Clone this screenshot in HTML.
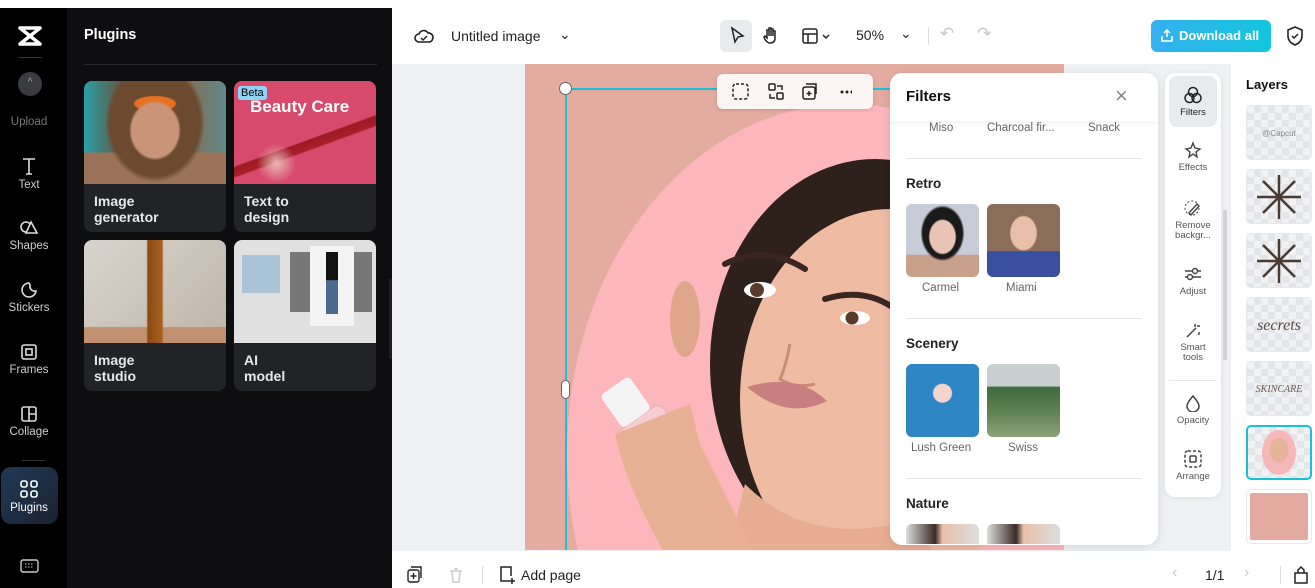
<!DOCTYPE html>
<html><head><meta charset="utf-8"><style>
*{box-sizing:border-box;margin:0;padding:0}
html,body{width:1315px;height:588px;overflow:hidden}
body{font-family:"Liberation Sans",sans-serif;background:#fff;position:relative}
.a{position:absolute}
.side{left:0;top:8px;width:67px;height:580px;background:#000}
.si{position:absolute;left:0;width:58px;text-align:center;color:#cfcfd2;font-size:11.5px}
.si svg{display:block;margin:0 auto 3px}
.panel{left:67px;top:8px;width:325px;height:580px;background:#0e0e10}
.card{position:absolute;width:142px;height:151px;background:#222327;border-radius:8px;overflow:hidden}
.card .im{height:103px}
.card .t{color:#e8e8ea;font-weight:bold;font-size:14px;line-height:16px;padding:9px 10px}
.tb{color:#222;font-size:14px}
.tl{position:absolute;left:1165px;width:56px;text-align:center;font-size:9.5px;color:#555;line-height:10px}
.tl svg{display:block;margin:0 auto 4px}
.lay{position:absolute;left:1246px;width:66px;height:55px;border-radius:5px;background:repeating-conic-gradient(#e3e5e8 0 25%,#f1f2f4 0 50%) 0 0/14px 14px;border:1px solid #e6e8ea;overflow:hidden}
.fl{font-size:11.5px;color:#666;position:absolute}
.th{position:absolute;width:73px;height:73px;border-radius:6px;overflow:hidden}
.sec{position:absolute;left:906px;font-size:13.5px;font-weight:bold;color:#222}
.hr{position:absolute;left:906px;width:236px;height:1px;background:#e6e6e6}
</style></head><body>
<div class="a side">
 <svg class="a" style="left:17px;top:17px" width="26" height="22" viewBox="0 0 26 22"><path d="M3 3h20M3 19h20M3 3l20 16M23 3L3 19" stroke="#fff" stroke-width="3.5" fill="none" stroke-linecap="round"/></svg>
 <div class="a" style="left:18px;top:49px;width:24px;height:1px;background:#333"></div>
 <div class="a" style="left:18px;top:64px;width:24px;height:24px;border-radius:50%;background:#3a3b3f;color:#aaa;font-size:10px;text-align:center;line-height:22px">^</div>
 <div class="si" style="top:108px;color:#777">Upload</div>
 <div class="si" style="top:148px"><svg width="20" height="20" viewBox="0 0 20 20"><path d="M4 3h12M10 3v15M7 18h6" stroke="#ddd" stroke-width="1.6" fill="none"/></svg>Text</div>
 <div class="si" style="top:211px"><svg width="20" height="18" viewBox="0 0 20 18"><circle cx="7" cy="8" r="5" stroke="#ddd" stroke-width="1.6" fill="none"/><path d="M12 3l6 11H7z" stroke="#ddd" stroke-width="1.6" fill="#000"/></svg>Shapes</div>
 <div class="si" style="top:273px"><svg width="20" height="18" viewBox="0 0 20 18"><path d="M10 2a7 7 0 1 0 7 8 5 5 0 0 1-6-6z" stroke="#ddd" stroke-width="1.6" fill="none"/></svg>Stickers</div>
 <div class="si" style="top:335px"><svg width="20" height="18" viewBox="0 0 20 18"><rect x="3" y="2" width="14" height="14" rx="2" stroke="#ddd" stroke-width="1.6" fill="none"/><rect x="7" y="6" width="6" height="6" stroke="#ddd" stroke-width="1.6" fill="none"/></svg>Frames</div>
 <div class="si" style="top:397px"><svg width="20" height="18" viewBox="0 0 20 18"><rect x="3" y="2" width="14" height="14" rx="2" stroke="#ddd" stroke-width="1.6" fill="none"/><path d="M10 2v14M10 9h7" stroke="#ddd" stroke-width="1.6"/></svg>Collage</div>
 <div class="a" style="left:22px;top:399px;width:16px;height:1px"></div>
 <div class="a" style="left:22px;top:398px;width:24px;height:1px;background:#333;top:398px;display:none"></div>
 <div class="a" style="left:22px;top:399px;width:16px"></div>
 <div class="a" style="left:22px;top:452px;width:24px;height:1px;background:#333"></div>
 <div class="a" style="left:1px;top:459px;width:57px;height:57px;border-radius:10px;background:linear-gradient(135deg,#1f3a55,#1b2230)"></div>
 <div class="si" style="top:471px;color:#fff"><svg width="20" height="20" viewBox="0 0 20 20"><g stroke="#fff" stroke-width="1.6" fill="none"><rect x="2" y="2" width="6" height="6" rx="2"/><rect x="12" y="2" width="6" height="6" rx="2"/><rect x="2" y="12" width="6" height="6" rx="2"/><rect x="12" y="12" width="6" height="6" rx="2"/></g></svg>Plugins</div>
 <svg class="a" style="left:20px;top:550px" width="20" height="16"><rect x="1" y="2" width="17" height="12" rx="2" stroke="#ccc" stroke-width="1.4" fill="none"/><path d="M5 6h9M5 9h9" stroke="#ccc" stroke-dasharray="1.5 1.5"/></svg>
</div>
<div class="a panel">
 <div class="a" style="left:17px;top:19px;color:#fff;font-weight:bold;font-size:14.5px">Plugins</div>
 <div class="a" style="left:17px;top:56px;width:293px;height:1px;background:#2a2b2f"></div>
 <div class="card" style="left:17px;top:73px"><div class="im" style="background:radial-gradient(ellipse 26px 30px at 50% 48%,#c99478 90%,transparent),radial-gradient(ellipse 22px 8px at 50% 22%,#e9701f 90%,transparent),radial-gradient(ellipse 50px 60px at 50% 40%,#6b4a30 90%,transparent),linear-gradient(0deg,#9a7258 30%,transparent 31%),linear-gradient(90deg,#2aa0a8,#6b4c35 30%,#8b6a50 70%,#5d8a8a)"></div><div class="t">Image<br>generator</div></div>
 <div class="card" style="left:167px;top:73px"><div class="im" style="background:radial-gradient(circle 22px at 30% 80%,#e9b7b5,transparent 90%),linear-gradient(160deg,transparent 55%,#9c1a25 56%,#a81e2a 62%,transparent 63%),#d84a6c;position:relative"><span class="a" style="left:4px;top:5px;background:#8fd3f5;color:#000;font-size:11px;padding:1px 3px;border-radius:3px">Beta</span><span class="a" style="left:16px;top:16px;color:#fff;font-weight:bold;font-size:17px">Beauty Care</span></div><div class="t">Text to<br>design</div></div>
 <div class="card" style="left:17px;top:232px"><div class="im" style="background:linear-gradient(90deg,transparent 44%,#8a4a15 45%,#a8611f 55%,transparent 56%),linear-gradient(0deg,#c09070 15%,transparent 16%),linear-gradient(135deg,#d8d4cd,#bfb5a8)"></div><div class="t">Image<br>studio</div></div>
 <div class="card" style="left:167px;top:232px"><div class="im" style="background:#e0e0e0;position:relative"><div class="a" style="left:8px;top:15px;width:38px;height:38px;background:#a9c4d6"></div><div class="a" style="left:56px;top:12px;width:82px;height:60px;background:#777"></div><div class="a" style="left:76px;top:6px;width:44px;height:80px;background:#f4f4f4"><div style="margin:6px auto;width:12px;height:62px;background:linear-gradient(#111 45%,#4a6a90 46%)"></div></div></div><div class="t">AI<br>model</div></div>
</div>
<div class="a" style="left:389px;top:279px;width:9px;height:80px;background:#1d1e22;border-radius:0 8px 8px 0"></div>
<!-- canvas -->
<div class="a" style="left:392px;top:64px;width:838px;height:487px;background:#eef0f3"></div>
<div class="a" style="left:525px;top:64px;width:539px;height:486px;background:#e4aca1;overflow:hidden">
 <div class="a" style="left:42px;top:40px;width:560px;height:700px;border-radius:50%;background:#fdb7bc"></div>
 <svg class="a" style="left:0;top:0" width="539" height="486">
  <ellipse cx="350" cy="300" rx="165" ry="205" fill="#2e211c"/>
  <ellipse cx="365" cy="335" rx="150" ry="190" fill="#efbba3"/>
  <path d="M220 420q60 60 150 40l60 40H200z" fill="#e6ad93"/>
  <ellipse cx="160" cy="255" rx="15" ry="38" fill="#e0a68c"/>
  <path d="M200 200q40-20 80 5M300 235q40-12 70 10" stroke="#3a2520" stroke-width="6" fill="none" stroke-linecap="round"/>
  <ellipse cx="235" cy="226" rx="16" ry="8" fill="#fff"/><circle cx="232" cy="226" r="7" fill="#5a3a28"/>
  <ellipse cx="330" cy="254" rx="15" ry="7" fill="#fff"/><circle cx="327" cy="254" r="6.5" fill="#5a3a28"/>
  <path d="M265 280q-5 25-10 35q15 10 35 5" stroke="#c98c76" stroke-width="3" fill="none"/>
  <path d="M222 323q50-15 80 14q-40 20-80-14z" fill="#c77f80"/>
  <g transform="rotate(-35 140 390)"><rect x="110" y="345" width="55" height="110" rx="8" fill="#f6cdd2" stroke="#e3b0b5"/><rect x="120" y="305" width="35" height="40" rx="5" fill="#f4f4f4"/></g>
  <path d="M90 370q10 50 50 120h90q-30-60-55-110l-10-40z" fill="#e8b196"/>
 </svg>
</div>
<div class="a" style="left:565px;top:88px;width:2px;height:462px;background:#1cc0d4"></div>
<div class="a" style="left:565px;top:88px;width:325px;height:2px;background:#1cc0d4"></div>
<div class="a" style="left:559px;top:82px;width:13px;height:13px;border-radius:50%;background:#fff;border:1px solid #666"></div>
<div class="a" style="left:561px;top:380px;width:9px;height:19px;border-radius:5px;background:#fff;border:1px solid #666"></div>
<div class="a" style="left:717px;top:74px;width:156px;height:35px;background:#fbf5f4;border-radius:6px;box-shadow:0 1px 4px rgba(0,0,0,.15)">
 <svg class="a" style="left:15px;top:9px" width="120" height="18"><g stroke="#222" stroke-width="1.5" fill="none"><rect x="1" y="1" width="15" height="15" rx="3" stroke-dasharray="3 2"/><rect x="37" y="1" width="6" height="6" rx="1"/><rect x="45" y="10" width="6" height="6" rx="1"/><path d="M45 3h5v4M43 15h-5v-4"/><rect x="71" y="4" width="12" height="12" rx="2"/><path d="M74 1h10v10M77 8v5M74.5 10.5h5"/></g><g fill="#222"><circle cx="110" cy="9" r="1.5"/><circle cx="115" cy="9" r="1.5"/><circle cx="120" cy="9" r="1.5"/></g></svg>
</div>
<!-- top bar -->
<div class="a" style="left:392px;top:8px;width:923px;height:56px;background:#fff"></div>
<svg class="a" style="left:414px;top:26px" width="20" height="20"><path d="M5 16a4 4 0 0 1 0-8 5 5 0 0 1 9-1 4 4 0 0 1 1 9z" stroke="#222" stroke-width="1.6" fill="none"/><path d="M7 12l2 2 4-4" stroke="#222" stroke-width="1.4" fill="none"/></svg>
<div class="a tb" style="left:451px;top:28px">Untitled image</div>
<div class="a tb" style="left:559px;top:26px">⌄</div>
<div class="a" style="left:720px;top:20px;width:32px;height:32px;background:#e9eaec;border-radius:6px"></div>
<svg class="a" style="left:727px;top:26px" width="130" height="20"><g stroke="#222" stroke-width="1.5" fill="none"><path d="M5 2l11 8-5 1-3 5z"/><path d="M42 17q-4-2-5-6l1-1 2 2V4h2v6V2h2v8V3h2v7V5h2v7q0 5-5 5z"/><rect x="76" y="3" width="14" height="14" rx="2"/><path d="M76 8h14M81 8v9M96 9l3 3 3-3"/></g></svg>
<div class="a tb" style="left:856px;top:27px">50%</div>
<div class="a tb" style="left:900px;top:25px">⌄</div>
<div class="a" style="left:928px;top:27px;width:1px;height:18px;background:#ddd"></div>
<div class="a" style="left:940px;top:24px;color:#c8c8c8;font-size:17px">↶</div>
<div class="a" style="left:977px;top:24px;color:#c8c8c8;font-size:17px">↷</div>
<div class="a" style="left:1151px;top:20px;width:120px;height:32px;border-radius:6px;background:linear-gradient(90deg,#36b0f0,#12c6dc);color:#fff;font-weight:bold;font-size:13px;line-height:32px;padding-left:28px">Download all</div>
<svg class="a" style="left:1160px;top:28px" width="14" height="14"><path d="M7 9V2M4 5l3-3 3 3M2 8v5h10V8" stroke="#fff" stroke-width="1.5" fill="none"/></svg>
<svg class="a" style="left:1285px;top:25px" width="20" height="22"><path d="M10 2l7 3v6q0 6-7 9-7-3-7-9V5z" stroke="#222" stroke-width="1.6" fill="none"/><path d="M7 11l2 2 4-4" stroke="#222" stroke-width="1.5" fill="none"/></svg>
<!-- filters -->
<div class="a" style="left:890px;top:73px;width:268px;height:472px;background:#fff;border-radius:12px;box-shadow:0 2px 10px rgba(0,0,0,.1);overflow:hidden">
 <div style="height:48px;box-shadow:0 2px 6px rgba(0,0,0,.05);position:relative"><span class="a" style="left:16px;top:15px;font-weight:bold;font-size:15px;color:#111">Filters</span><span class="a" style="left:225px;top:10px;font-size:22px;color:#888">×</span></div>
</div>
<div class="fl" style="left:929px;top:122px">Miso</div><div class="fl" style="left:987px;top:122px">Charcoal fir...</div><div class="fl" style="left:1088px;top:122px">Snack</div>
<div class="hr" style="top:158px"></div>
<div class="sec" style="top:176px">Retro</div>
<div class="th" style="left:906px;top:204px;background:radial-gradient(ellipse 14px 18px at 50% 45%,#e9c4b4 90%,transparent),radial-gradient(ellipse 22px 28px at 50% 40%,#1a1a1a 90%,transparent),linear-gradient(0deg,#c9a08a 30%,#c8ccd8 31%)"></div>
<div class="th" style="left:987px;top:204px;background:radial-gradient(ellipse 14px 18px at 50% 40%,#e8c0a8 90%,transparent),linear-gradient(0deg,#3a4fa0 35%,#8a6e5a 36%)"></div>
<div class="fl" style="left:922px;top:282px">Carmel</div><div class="fl" style="left:1006px;top:282px">Miami</div>
<div class="hr" style="top:318px"></div>
<div class="sec" style="top:336px">Scenery</div>
<div class="th" style="left:906px;top:364px;background:radial-gradient(circle 10px at 50% 40%,#f3d4cf 90%,transparent),#2f86c4"></div>
<div class="th" style="left:987px;top:364px;background:linear-gradient(#c9cfcf 30%,#3f6a40 32%,#5a7d4c 60%,#8fa07a)"></div>
<div class="fl" style="left:911px;top:442px">Lush Green</div><div class="fl" style="left:1008px;top:442px">Swiss</div>
<div class="hr" style="top:478px"></div>
<div class="sec" style="top:496px">Nature</div>
<div class="th" style="left:906px;top:524px;height:20px;border-radius:6px 6px 0 0;background:linear-gradient(90deg,#ddd,#3a2a24 40%,#e8c0a8 50%,#ddd)"></div>
<div class="th" style="left:987px;top:524px;height:20px;border-radius:6px 6px 0 0;background:linear-gradient(90deg,#ddd,#3a2a24 40%,#e8c0a8 50%,#ddd)"></div>
<!-- tools -->
<div class="a" style="left:1165px;top:73px;width:56px;height:424px;background:#fff;border-radius:10px;box-shadow:0 1px 6px rgba(0,0,0,.08)"></div>
<div class="a" style="left:1169px;top:76px;width:48px;height:51px;background:#e8eaed;border-radius:8px"></div>
<div class="tl" style="top:86px;color:#222"><svg width="20" height="18"><g stroke="#222" stroke-width="1.5" fill="none"><circle cx="10" cy="6" r="4.5"/><circle cx="6.5" cy="12" r="4.5"/><circle cx="13.5" cy="12" r="4.5"/></g></svg>Filters</div>
<div class="tl" style="top:141px"><svg width="20" height="18"><path d="M10 2l2 5 5 1-4 3 1 5-4-3-4 3 1-5-4-3 5-1z" stroke="#444" stroke-width="1.4" fill="none"/></svg>Effects</div>
<div class="tl" style="top:199px"><svg width="20" height="18"><path d="M6 14l8-9 2 2-8 9z" stroke="#444" stroke-width="1.4" fill="none"/><circle cx="9" cy="9" r="7" stroke="#444" stroke-dasharray="2 2" fill="none"/></svg>Remove<br>backgr...</div>
<div class="tl" style="top:265px"><svg width="20" height="18"><g stroke="#444" stroke-width="1.4" fill="none"><path d="M2 6h16M2 12h16"/><circle cx="12" cy="6" r="2.5" fill="#fff"/><circle cx="7" cy="12" r="2.5" fill="#fff"/></g></svg>Adjust</div>
<div class="tl" style="top:321px"><svg width="20" height="18"><path d="M4 16l9-9M12 3v3M14 5h3M16 11v3" stroke="#444" stroke-width="1.5" fill="none"/></svg>Smart<br>tools</div>
<div class="a" style="left:1169px;top:380px;width:48px;height:1px;background:#e6e6e6"></div>
<div class="tl" style="top:394px"><svg width="20" height="18"><path d="M10 2q6 7 6 10a6 6 0 0 1-12 0q0-3 6-10z" stroke="#444" stroke-width="1.5" fill="none"/></svg>Opacity</div>
<div class="tl" style="top:450px"><svg width="20" height="18"><rect x="2" y="1" width="16" height="16" rx="3" stroke="#444" stroke-width="1.5" stroke-dasharray="3 2" fill="none"/><rect x="7" y="6" width="6" height="6" rx="1" stroke="#444" stroke-width="1.5" fill="none"/></svg>Arrange</div>
<div class="a" style="left:1223px;top:210px;width:4px;height:150px;background:#d0d2d6;border-radius:2px"></div>
<!-- layers -->
<div class="a" style="left:1230px;top:64px;width:85px;height:487px;background:#fff;border-left:1px solid #eceef0"></div>
<div class="a" style="left:1246px;top:77px;font-weight:bold;font-size:13px;color:#111">Layers</div>
<div class="lay" style="top:105px;font-size:8px;color:#888;text-align:center;line-height:55px">@Capcut</div>
<div class="lay" style="top:169px"><svg width="64" height="53"><g stroke="#4a3a34" stroke-width="2.5"><path d="M32 5v44M10 27h44M16 11l32 32M48 11l-32 32"/></g></svg></div>
<div class="lay" style="top:233px"><svg width="64" height="53"><g stroke="#4a3a34" stroke-width="2.5"><path d="M32 5v44M10 27h44M16 11l32 32M48 11l-32 32"/></g></svg></div>
<div class="lay" style="top:297px;font-family:'Liberation Serif',serif;font-style:italic;font-size:16px;color:#5a4a44;text-align:center;line-height:55px">secrets</div>
<div class="lay" style="top:361px;font-family:'Liberation Serif',serif;font-style:italic;font-size:10px;color:#6a5a54;text-align:center;line-height:55px">SKINCARE</div>
<div class="lay" style="top:425px;border:2px solid #1cc0d4"><div style="margin:3px auto;width:34px;height:45px;border-radius:50%;background:radial-gradient(ellipse 10px 13px at 50% 45%,#e7b49b 90%,#f5b7b8)"></div></div>
<div class="lay" style="top:489px;background:#fff"><div style="margin:3px;height:47px;background:#e3aa9f;border-radius:2px"></div></div>
<!-- bottom -->
<div class="a" style="left:392px;top:551px;width:923px;height:37px;background:#fff"></div>
<svg class="a" style="left:405px;top:566px" width="60" height="18"><g stroke="#222" stroke-width="1.4" fill="none"><rect x="3" y="4" width="11" height="12" rx="2"/><path d="M6 1h10v11M8.5 7v6M5.5 10h6"/></g><path d="M45 5h12M47 5l1 11h6l1-11M49 3h4" stroke="#ccc" stroke-width="1.4" fill="none"/></svg>
<div class="a" style="left:482px;top:566px;width:1px;height:18px;background:#ddd"></div>
<svg class="a" style="left:498px;top:565px" width="18" height="20"><path d="M12 16H3V2h10v9M14 13v6M11 16h6" stroke="#222" stroke-width="1.5" fill="none"/></svg>
<div class="a tb" style="left:521px;top:567px">Add page</div>
<div class="a" style="left:1172px;top:564px;color:#ccc;font-size:16px">‹</div>
<div class="a tb" style="left:1205px;top:567px">1/1</div>
<div class="a" style="left:1244px;top:564px;color:#ccc;font-size:16px">›</div>
<div class="a" style="left:1280px;top:566px;width:1px;height:18px;background:#ddd"></div>
<svg class="a" style="left:1292px;top:563px" width="18" height="22"><path d="M3 10h12v10H3zM6 10V7l3-3 3 3v3" stroke="#222" stroke-width="1.5" fill="none"/></svg>
</body></html>
